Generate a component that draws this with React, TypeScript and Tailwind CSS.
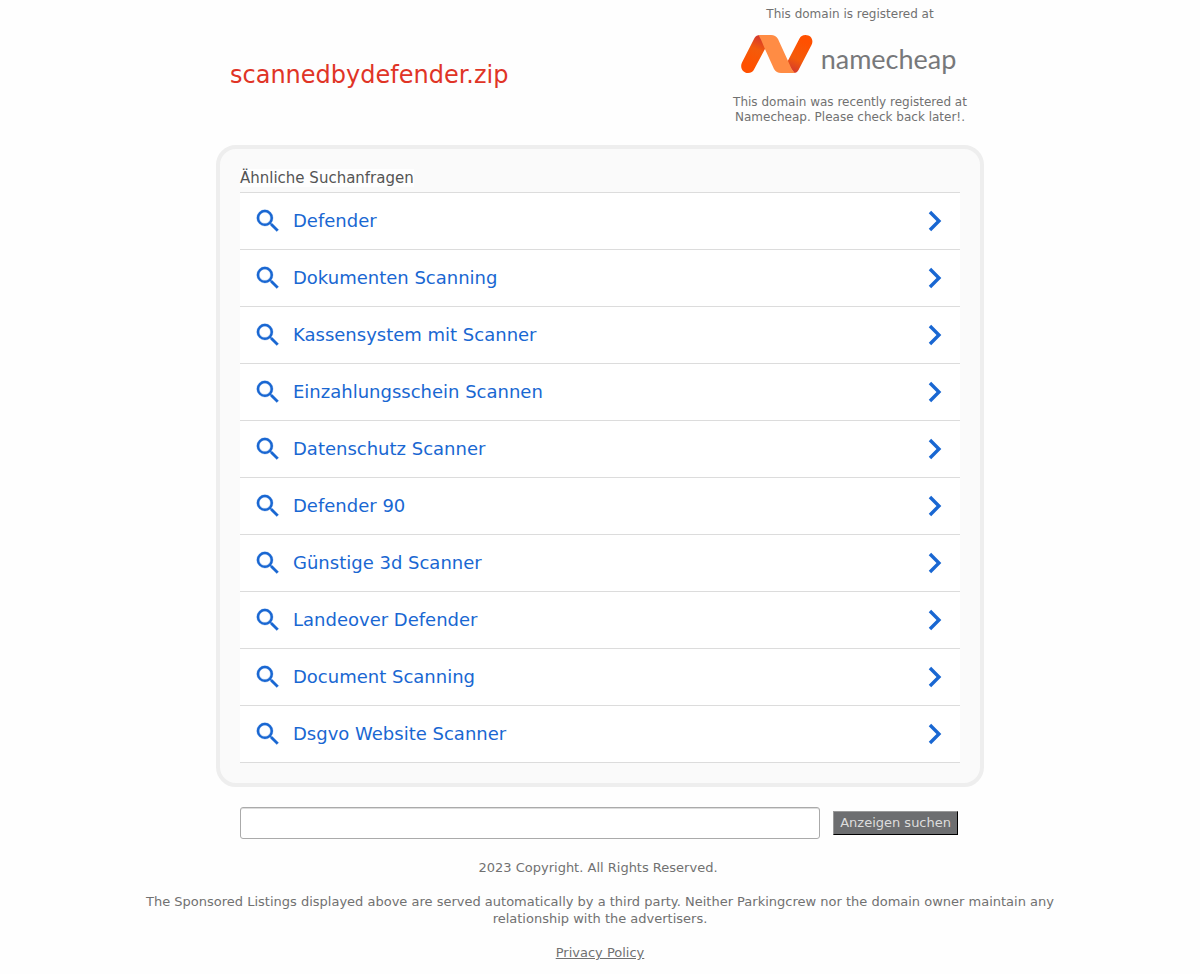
const searches = [
  'Defender',
  'Dokumenten Scanning',
  'Kassensystem mit Scanner',
  'Einzahlungsschein Scannen',
  'Datenschutz Scanner',
  'Defender 90',
  'Günstige 3d Scanner',
  'Landeover Defender',
  'Document Scanning',
  'Dsgvo Website Scanner',
];

function SearchIcon() {
  return (
    <svg viewBox="0 0 24 24" className="size-[30px] shrink-0" fill="currentColor" stroke="currentColor" strokeWidth="0.2" aria-hidden="true">
      <path d="M15.5 14h-.79l-.28-.27A6.471 6.471 0 0 0 16 9.5 6.5 6.5 0 1 0 9.5 16c1.61 0 3.09-.59 4.23-1.57l.27.28v.79l5 4.99L20.49 19l-4.99-5zm-6 0C7.01 14 5 11.99 5 9.5S7.01 5 9.5 5 14 7.01 14 9.5 11.99 14 9.5 14z" />
    </svg>
  );
}

function ChevronIcon() {
  return (
    <svg viewBox="0 0 24 24" className="size-10 shrink-0" fill="currentColor" aria-hidden="true">
      <path d="M9.700 5.900L8.250 7.350 12.900 12l-4.650 4.650L9.700 18.100l6.100-6.100z" />
    </svg>
  );
}

function NamecheapLogo() {
  return (
    <a href="#namecheap" aria-label="namecheap" className="flex gap-2 pr-[3px]">
      <svg viewBox="0 0 72 38" className="h-[38px] w-[72px]" aria-hidden="true">
        <defs>
          <linearGradient id="left" x1="18" y1="2" x2="6" y2="30" gradientUnits="userSpaceOnUse">
            <stop offset="0" stopColor="#d53a2c" />
            <stop offset="0.4" stopColor="#f35b0b" />
            <stop offset="1" stopColor="#ff5000" />
          </linearGradient>
          <linearGradient id="right" x1="53" y1="37" x2="66" y2="8" gradientUnits="userSpaceOnUse">
            <stop offset="0" stopColor="#d53a2c" />
            <stop offset="0.4" stopColor="#f35b0b" />
            <stop offset="1" stopColor="#ff5000" />
          </linearGradient>
        </defs>
        <path d="M19 0C16.500 0 14.500 1 13.500 3L1 27.500C-1.500 32.500 2 38 7 38C10 38 12 36.500 13 34.500L25 12Z" fill="url(#left)" />
        <path d="M53 38C55 38 56.500 37 57.500 35L70.500 10C73 5 70 0 64.500 0C61.500 0 59.500 1.500 58.500 3.500L46 27.500Z" fill="url(#right)" />
        <path d="M18 0H30C33 0 35.500 1.500 37 4L47.500 27C49.500 31 50.500 35 54 38H40C37 38 34.500 36.500 33 34L23.500 13L21 7C19.500 3 17.500 1 18 0Z" fill="#ff8c44" />
      </svg>
      <span className="font-['Lato',sans-serif] text-[27px] leading-[48px] text-[#77787a]">namecheap</span>
    </a>
  );
}

export default function App() {
  return (
    <div className="min-h-screen bg-[#fefefe] px-4 pb-3 font-['DejaVu_Sans',sans-serif] text-[#717171]">
      <header className="mx-auto flex max-w-[740px] items-start justify-between">
        <h1 className="pt-[59px] text-2xl text-[#e03426]">scannedbydefender.zip</h1>
        <div className="flex w-60 flex-col items-center pt-[7px] text-center text-xs leading-[15px]">
          <p>This domain is registered at</p>
          <div className="flex h-[73px] items-start pt-[13px]">
            <NamecheapLogo />
          </div>
          <p>This domain was recently registered at Namecheap. Please check back later!.</p>
        </div>
      </header>

      <main className="mx-auto max-w-3xl">
        <section className="mt-5 rounded-[20px] border-4 border-[#eee] bg-[#fafafa] px-5 pt-5 pb-5">
          <h2 className="mb-[5px] text-[15px] leading-[18px] text-[#555]">
            <span className="bg-[#fefefe]">Ähnliche Suchanfragen</span>
          </h2>
          <ul className="border-t border-[#dcdcdc] bg-white">
            {searches.map((label) => (
              <li key={label} className="border-b border-[#dcdcdc]">
                <a href="#search" className="flex h-14 items-center pr-[5px] pl-[13px] text-lg text-[#1967d2]">
                  <SearchIcon />
                  <span className="ml-[10px] flex-1">{label}</span>
                  <ChevronIcon />
                </a>
              </li>
            ))}
          </ul>
        </section>

        <form className="mt-5 flex items-center gap-[13px] pr-[26px] pl-6" onSubmit={(e) => e.preventDefault()}>
          <input
            type="text"
            aria-label="Suche"
            className="h-8 min-w-0 flex-1 rounded-[3px] border border-[#aaa] bg-white px-2 text-sm shadow-[inset_0_1px_0_#ddd] outline-none"
          />
          <button
            type="submit"
            className="h-6 border border-t-[#999] border-r-black border-b-black border-l-[#999] bg-[#6d6e70] px-[6px] text-[13px] leading-[20px] text-[#ddd]"
          >
            Anzeigen suchen
          </button>
        </form>
      </main>

      <footer className="mx-auto mt-5 max-w-[960px] text-center text-[13px] leading-[17px]">
        <p className="pr-1">2023 Copyright. All Rights Reserved.</p>
        <p className="mt-[17px]">
          The Sponsored Listings displayed above are served automatically by a third party. Neither Parkingcrew nor the
          domain owner maintain any relationship with the advertisers.
        </p>
        <p className="mt-[17px]">
          <a href="#privacy" className="underline">
            Privacy Policy
          </a>
        </p>
      </footer>
    </div>
  );
}
